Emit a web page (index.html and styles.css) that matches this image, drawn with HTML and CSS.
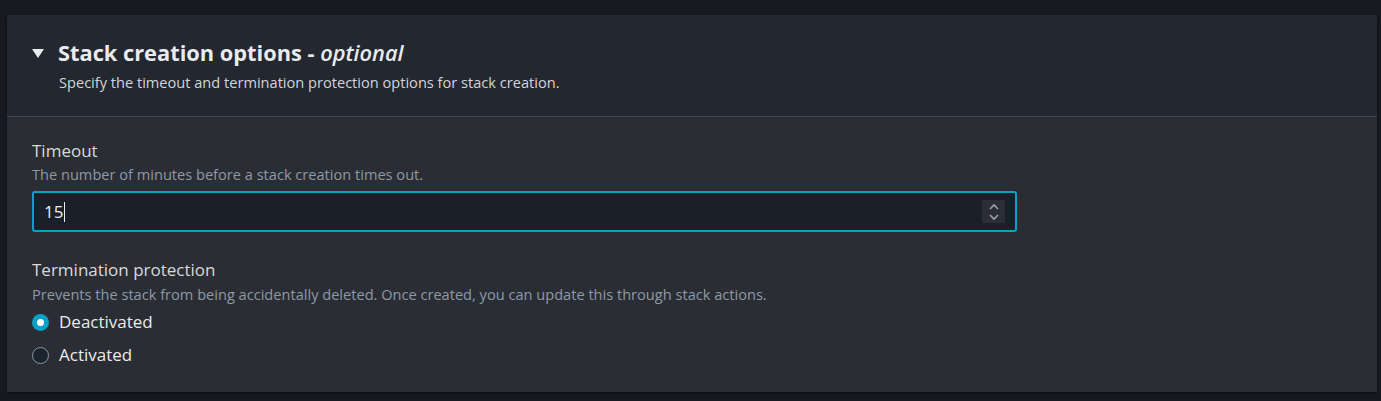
FILE: index.html
```html
<!DOCTYPE html>
<html>
<head>
<meta charset="utf-8">
<link rel="stylesheet" href="styles.css">
</head>
<body>
<section class="container">
  <header class="header">
    <div class="title-row">
      <svg class="caret" width="12" height="10" viewBox="0 0 12 10"><polygon points="0,0 12,0 6,9" fill="#e9ebed"/></svg>
      <h2 class="title">Stack creation options - <i>optional</i></h2>
    </div>
    <p class="desc">Specify the timeout and termination protection options for stack creation.</p>
  </header>
  <div class="body">
    <div class="field">
      <div class="label">Timeout</div>
      <div class="help">The number of minutes before a stack creation times out.</div>
      <div class="input">
        <span class="value">15</span><span class="cursor"></span>
        <span class="spinner">
          <svg width="12" height="18" viewBox="0 0 12 18"><polyline points="2,6 6,2 10,6" fill="none" stroke="#9ba2ad" stroke-width="1.6"/><polyline points="2,12 6,16 10,12" fill="none" stroke="#9ba2ad" stroke-width="1.6"/></svg>
        </span>
      </div>
    </div>
    <div class="field field2">
      <div class="label">Termination protection</div>
      <div class="help">Prevents the stack from being accidentally deleted. Once created, you can update this through stack actions.</div>
      <div class="radios">
        <label class="radio"><span class="dot checked"></span>Deactivated</label>
        <label class="radio"><span class="dot"></span>Activated</label>
      </div>
    </div>
  </div>
</section>
</body>
</html>
```
FILE: styles.css
```css
html, body { margin: 0; padding: 0; }
body {
  background: #16191f;
  font-family: "Open Sans", "Noto Sans", sans-serif;
  color: #d1d5db;
  height: 401px;
  padding: 15px 4px 0 7px;
  box-sizing: border-box;
}
.container {
  width: 1370px;
  height: 377px;
  background: #2a2d33;
  box-shadow: 0 1px 2px rgba(0,0,0,0.5);
  display: flex;
  flex-direction: column;
}
.header {
  background: #232730;
  border-bottom: 1px solid #414750;
  height: 102px;
  box-sizing: border-box;
  padding: 24px 0 0 25px;
}
.title-row { display: flex; align-items: center; gap: 14px; }
.caret { margin-top: 1px; }
.title {
  margin: 0;
  font-size: 21.8px;
  font-weight: 700;
  color: #e9ebed;
  line-height: 28px;
}
.title i { font-weight: 600; }
.desc {
  margin: 5px 0 0 27px;
  font-size: 14.6px;
  line-height: 20px;
  color: #d1d5db;
}
.body { padding: 23px 0 0 25px; }
.label {
  font-size: 17px;
  line-height: 22px;
  color: #d5dbdb;
}
.help {
  font-size: 14.6px;
  line-height: 20px;
  color: #8d99a8;
  margin-top: 2px;
}
.input {
  margin-top: 7px;
  width: 985px;
  height: 41px;
  box-sizing: border-box;
  border: 2px solid #0aa1c9;
  border-radius: 3px;
  background: #1a2029;
  display: flex;
  align-items: center;
  padding: 0 10px 0 10px;
}
.value { font-size: 17px; color: #e9ebed; }
.cursor { width: 1px; height: 20px; background: #e9ebed; margin-left: 1px; }
.spinner {
  margin-left: auto;
  width: 23px;
  height: 23px;
  background: #2c2e37;
  display: flex;
  align-items: center;
  justify-content: center;
}
.field2 { margin-top: 27px; }
.field2 .help { margin-top: 3px; }
.radios { margin-top: 7px; display: flex; flex-direction: column; gap: 11px; }
.radio {
  display: flex;
  align-items: center;
  gap: 10px;
  font-size: 17px;
  line-height: 22px;
  color: #e9ebed;
}
.dot {
  width: 17px;
  height: 17px;
  box-sizing: border-box;
  border-radius: 50%;
  border: 1.5px solid #8d99a8;
  background: #1b232d;
}
.dot.checked {
  border: 5px solid #0aa1c9;
  background: #fff;
}
```
